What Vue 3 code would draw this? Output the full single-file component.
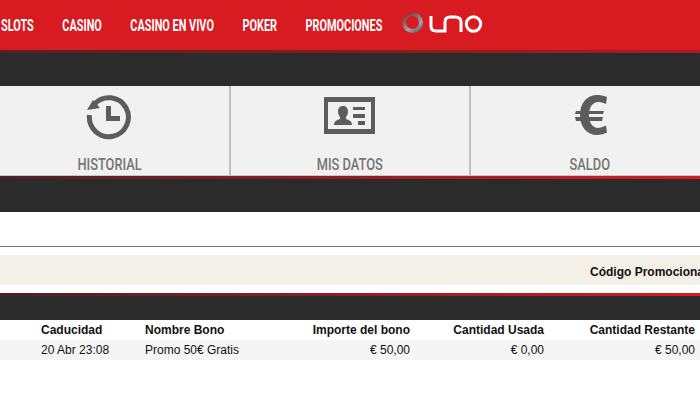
<template>
  <div class="page">
    <header class="topbar">
      <div class="menu-box">
        <nav class="menu">
          <a v-for="item in menu" :key="item">{{ item }}</a>
        </nav>
      </div>
      <svg class="logo" width="84" height="24" viewBox="0 0 84 24">
        <defs>
          <linearGradient id="ring" x1="0.1" y1="0" x2="0.7" y2="1">
            <stop offset="0" stop-color="#9c2a2e" />
            <stop offset="0.45" stop-color="#8a7474" />
            <stop offset="0.75" stop-color="#a5a5a7" />
            <stop offset="1" stop-color="#747577" />
          </linearGradient>
        </defs>
        <circle cx="11.500" cy="11.500" r="8.500" fill="none" stroke="url(#ring)" stroke-width="4" />
        <g fill="none" stroke="#fff" stroke-width="3">
          <path d="M30 5V15Q30 20 35 20H44V11Q44 6 49 6H54Q60 6 60 11V21" />
          <circle cx="72.500" cy="13" r="7.200" />
        </g>
      </svg>
    </header>
    <div class="rule rule-top"></div>
    <div class="dark dark-a"></div>

    <section class="tiles">
      <div class="tile">
        <svg width="48" height="48" viewBox="0 0 48 48">
          <path d="M4.500 22A19.500 19.500 0 1 0 9.500 11" fill="none" stroke="#5c5c5c" stroke-width="5" />
          <path d="M2 17L8 7L15 15Z" fill="#5c5c5c" />
          <path d="M23.500 13V25.500H35" fill="none" stroke="#5c5c5c" stroke-width="5" />
        </svg>
        <span>HISTORIAL</span>
      </div>
      <div class="tile">
        <svg width="52" height="48" viewBox="0 0 52 48">
          <path fill-rule="evenodd" d="M0 4H51V41H0ZM4 9V36H47V9Z" fill="#5c5c5c" />
          <path d="M19 13C22 13 24 15 24 18.500C24 21 23 23 22 24V26C25 27 28 28 28 32H10C10 28 13 27 16 26V24C15 23 14 21 14 18.500C14 15 16 13 19 13Z" fill="#5c5c5c" />
          <path d="M29 14H41V17H29ZM29 21H41V25H29ZM34 28H41V32H34Z" fill="#5c5c5c" />
        </svg>
        <span>MIS DATOS</span>
      </div>
      <div class="tile">
        <svg width="34" height="48" viewBox="0 2 34 48">
          <path d="M33 6C29 4.500 26 4 23 4C13 4 6 12 6 24C6 36 13 44 23 44C27 44 30 43 33 41.500L32 34.500C29 36 26 37 24 37C19 37 15 32 15 24C15 16 19 11 24 11C26 11 29 11.500 32 13Z" fill="#5c5c5c" />
          <path d="M2 20H30L29 23H1ZM1 26H29L28 30H2Z" fill="#5c5c5c" />
        </svg>
        <span>SALDO</span>
      </div>
    </section>
    <div class="rule rule-bottom"></div>
    <div class="dark dark-b"></div>

    <hr class="sep" />
    <div class="promo"><b>Código Promocional</b></div>
    <div class="rule rule-table"></div>
    <div class="dark dark-c"></div>

    <div class="row head">
      <span v-for="(c, i) in columns" :key="c" :class="{ num: i > 1 }">{{ c }}</span>
    </div>
    <div class="row body">
      <span v-for="(c, i) in bono" :key="i" :class="{ num: i > 1 }">{{ c }}</span>
    </div>
  </div>
</template>

<script setup>
const menu = ['SLOTS', 'CASINO', 'CASINO EN VIVO', 'POKER', 'PROMOCIONES'];
const columns = ['Caducidad', 'Nombre Bono', 'Importe del bono', 'Cantidad Usada', 'Cantidad Restante'];
const bono = ['20 Abr 23:08', 'Promo 50€ Gratis', '€ 50,00', '€ 0,00', '€ 50,00'];
</script>

<style>
html,
body {
  margin: 0;
  background: #fff;
  overflow: hidden;
}
</style>

<style scoped>
.page {
  width: 700px;
  height: 400px;
  overflow: hidden;
  font-family: "Liberation Sans", Arial, sans-serif;
  font-size: 12px;
  color: #111;
}

.topbar {
  height: 50px;
  background: #d81a21;
  display: flex;
  align-items: center;
}

.menu-box {
  width: 401px;
  flex: none;
}

/* no condensed font installed, so squeeze Roboto */
.menu {
  display: inline-flex;
  gap: 42px;
  margin-left: 1px;
  font-family: Roboto, sans-serif;
  font-weight: 700;
  font-size: 16px;
  color: #fff;
  white-space: nowrap;
  transform: scaleX(0.68);
  transform-origin: left center;
}

.logo {
  margin-top: -4px;
  flex: none;
}

.rule {
  height: 3px;
  background: linear-gradient(to right, #4f2024, #d81a21);
}

.rule-top {
  background: linear-gradient(to right, #5a1f22, #a81c22);
}

.dark {
  background: #2b2b2b;
}

.dark-a {
  height: 33px;
}

.dark-b {
  height: 33px;
}

.dark-c {
  height: 24px;
}

.tiles {
  display: flex;
  width: 720px;
  margin-left: -10px;
  height: 89px;
  background: #f1f1f1;
  border-bottom: 1px solid #c8c8c8;
}

.tile {
  flex: 1;
  display: flex;
  flex-direction: column;
  align-items: center;
  box-sizing: border-box;
  padding-top: 7px;
  border-right: 2px solid #c0c0c0;
}

.tile:last-child {
  border-right: 0;
}

.tile svg {
  display: block;
  height: 48px;
}

.tile span {
  margin-top: 13px;
  font-family: Roboto, sans-serif;
  font-weight: 500;
  font-size: 17px;
  line-height: 20px;
  color: #757575;
  white-space: nowrap;
  transform: scaleX(0.755);
}

.tile:last-child span {
  margin-right: 2px;
}

.sep {
  margin: 34px 0 8px;
  border: 0;
  height: 1px;
  background: #777;
}

.promo {
  box-sizing: border-box;
  height: 30px;
  line-height: 30px;
  padding: 2px 0 0 590px;
  background: #f3f0e8;
  white-space: nowrap;
  overflow: hidden;
  margin-bottom: 8px;
}

.row {
  display: grid;
  grid-template-columns: 104px 125px 140px 134px 151px;
  padding-left: 41px;
  height: 20px;
  line-height: 20px;
}

.head {
  font-weight: 700;
}

.body {
  background: #f5f5f5;
}

.num {
  text-align: right;
}
</style>
